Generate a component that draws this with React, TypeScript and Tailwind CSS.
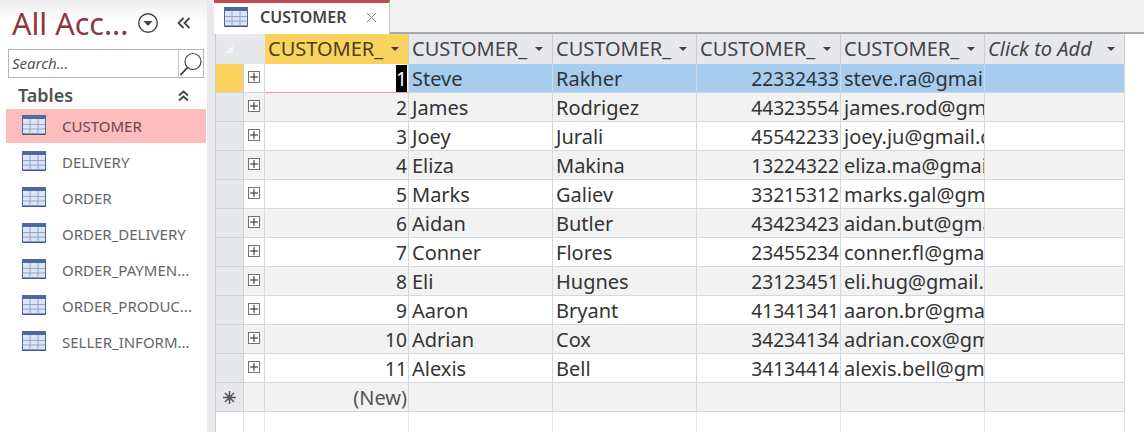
const font = { fontFamily: '"Noto Sans", "Open Sans", sans-serif' };

function TableIcon({ className = "" }: { className?: string }) {
  return (
    <svg width="24" height="20" viewBox="0 0 24 20" className={className}>
      <rect x="0" y="0" width="24" height="20" fill="#dbe5f3" />
      <rect x="0" y="0" width="24" height="4" fill="#4f6a9c" />
      <rect x="0" y="18.5" width="24" height="1.5" fill="#3d5480" />
      <rect x="0" y="0" width="1" height="20" fill="#4f6a9c" />
      <rect x="23" y="0" width="1" height="20" fill="#4f6a9c" />
      <path d="M1 9.5H23M1 14H23M8 4V19M16 4V19" stroke="#8ea6cc" strokeWidth="1" fill="none" />
    </svg>
  );
}

function Arrow() {
  return (
    <svg width="10" height="6" viewBox="0 0 10 6" className="shrink-0">
      <path d="M1 1H9L5 5Z" fill="#404040" />
    </svg>
  );
}

function Expander() {
  return (
    <div className="w-[12px] h-[12px] mb-[4px] border border-[#707070] bg-white flex items-center justify-center">
      <svg width="8" height="8" viewBox="0 0 8 8">
        <path d="M4 0V8M0 4H8" stroke="#222" strokeWidth="1" />
      </svg>
    </div>
  );
}

const nav = ["CUSTOMER", "DELIVERY", "ORDER", "ORDER_DELIVERY", "ORDER_PAYMEN...", "ORDER_PRODUC...", "SELLER_INFORM..."];

const rows = [
  [1, "Steve", "Rakher", 22332433, "steve.ra@gmail.com"],
  [2, "James", "Rodrigez", 44323554, "james.rod@gmail.com"],
  [3, "Joey", "Jurali", 45542233, "joey.ju@gmail.com"],
  [4, "Eliza", "Makina", 13224322, "eliza.ma@gmail.com"],
  [5, "Marks", "Galiev", 33215312, "marks.gal@gmail.com"],
  [6, "Aidan", "Butler", 43423423, "aidan.but@gmail.com"],
  [7, "Conner", "Flores", 23455234, "conner.fl@gmail.com"],
  [8, "Eli", "Hugnes", 23123451, "eli.hug@gmail.com"],
  [9, "Aaron", "Bryant", 41341341, "aaron.br@gmail.com"],
  [10, "Adrian", "Cox", 34234134, "adrian.cox@gmail.com"],
  [11, "Alexis", "Bell", 34134414, "alexis.bell@gmail.com"],
] as const;

const grid = "grid grid-cols-[28px_21px_144px_144px_144px_144px_144px_140px] w-[909px]";
const cell = "h-[29px] border-r border-b border-[#d4d9df] flex items-center overflow-hidden whitespace-nowrap text-[#333] pt-[2px] pl-[3px]";
const txt = "text-[20px] pr-[3px]";
const num = "justify-end pr-[1px] text-[19.2px]";

function Header({ label, active, italic }: { label: string; active?: boolean; italic?: boolean }) {
  return (
    <div className={`h-[30px] border-r border-[#c8ced6] flex items-center justify-between pl-[3px] pr-[8px] text-[20px] overflow-hidden whitespace-nowrap ${active ? "bg-[#fad35f] text-[#4a3f1a]" : "bg-[#e6e8ec] text-[#444]"} ${italic ? "italic" : ""}`}>
      <span>{label}</span>
      <Arrow />
    </div>
  );
}

export default function App() {
  return (
    <div className="w-[1144px] h-[432px] overflow-hidden flex bg-white" style={font}>
      <aside className="w-[207px] shrink-0 bg-white flex flex-col">
        <div className="h-[46px] pl-[12px] flex items-center gap-[9px] bg-gradient-to-b from-[#eeeeee] via-white to-white">
          <span className="text-[30.5px] leading-none text-[#8a3a3e]">All Acc...</span>
          <svg width="22" height="22" viewBox="0 0 22 22" className="shrink-0">
            <circle cx="11" cy="11" r="9.3" fill="none" stroke="#444" strokeWidth="1.4" />
            <path d="M6.5 9H15.5L11 14Z" fill="#444" />
          </svg>
          <svg width="16" height="14" viewBox="0 0 16 14" className="ml-[8px] shrink-0">
            <path d="M7.5 2L2.5 7L7.5 12M13.5 2L8.5 7L13.5 12" fill="none" stroke="#444" strokeWidth="1.8" />
          </svg>
        </div>
        <div className="ml-[8px] mr-[3px] mt-[3px] h-[29px] border border-[#b5b5b5] flex">
          <span className="flex-1 text-[15px] italic text-[#555] pl-[3px] leading-[26px]">Search...</span>
          <div className="w-[25px] border-l border-[#c5c5c5] flex items-center justify-center">
            <svg width="24" height="24" viewBox="0 0 24 24">
              <circle cx="14" cy="9.5" r="8" fill="none" stroke="#444" strokeWidth="1.2" />
              <path d="M8.5 15.5L1.5 23" stroke="#333" strokeWidth="1.8" />
            </svg>
          </div>
        </div>
        <div className="h-[31px] pl-[18px] pr-[17px] pt-[4px] flex items-center justify-between">
          <span className="text-[18px] font-semibold text-[#505050]">Tables</span>
          <svg width="13" height="13" viewBox="0 0 13 13">
            <path d="M2 6.5L6.5 2.5L11 6.5M2 11.5L6.5 7.5L11 11.5" fill="none" stroke="#444" strokeWidth="1.8" />
          </svg>
        </div>
        <div className="flex flex-col ml-[6px] mr-px">
          {nav.map((n, i) => (
            <div key={n} className={`h-[36px] flex items-start pl-[16px] gap-[16px] text-[15px] ${i === 0 ? "bg-[linear-gradient(#fdbcbe_0,#fdbcbe_34px,white_34px)] text-[#6b4548]" : "text-[#666]"}`}>
              <TableIcon className="shrink-0 mt-[6px]" />
              <span className="whitespace-nowrap leading-[34px]">{n}</span>
            </div>
          ))}
        </div>
      </aside>

      <div className="w-[8px] shrink-0 bg-[#e9e9ea]" />

      <main className="flex-1 flex flex-col bg-white min-w-0">
        <div className="h-[34px] flex bg-[#f2f2f2] shrink-0 items-stretch">
          <div className="w-[176px] -ml-[1px] border-t-[3px] border-t-[#c24a50] border-r border-r-[#c8c8c8] bg-white flex items-center pl-[10px] pb-[3px]">
            <TableIcon />
            <span className="ml-[12px] text-[16px] font-semibold text-[#444]">CUSTOMER</span>
            <svg width="11" height="11" viewBox="0 0 11 11" className="ml-[20px]">
              <path d="M1 1L10 10M10 1L1 10" stroke="#888" strokeWidth="1" />
            </svg>
          </div>
          <div className="flex-1 border-b-2 border-[#a9a9a9]" />
        </div>

        <div className="flex-1 border-l border-[#c8ced6] overflow-hidden">
          <div className={grid}>
            <div className="col-span-2 h-[30px] bg-[#e6e8ec] flex items-center justify-center pr-[24px]">
              <svg width="10" height="10" viewBox="0 0 10 10"><path d="M1 9L9 1V9Z" fill="#f3f4f6" /></svg>
            </div>
            <Header label="CUSTOMER_" active />
            <Header label="CUSTOMER_" />
            <Header label="CUSTOMER_" />
            <Header label="CUSTOMER_" />
            <Header label="CUSTOMER_" />
            <Header label="Click to Add" italic />

            {rows.map((r, i) => {
              const sel = i === 0;
              const bg = sel ? "bg-[#a6cdef]" : i % 2 === 1 ? "bg-[#f2f2f2]" : "bg-white";
              return (
                <div key={r[0]} className="contents">
                  <div className={`h-[29px] border-b border-r border-[#cdd2d8] ${sel ? "bg-[#fad35f]" : "bg-[#e6e8ec]"}`} />
                  <div className={`${cell} pr-[3px] justify-center ${i % 2 === 1 ? "bg-[#f2f2f2]" : "bg-white"}`}><Expander /></div>
                  <div className={`${cell} ${num} ${sel ? "bg-white border-b-[#e89a9e]" : bg}`}>
                    {sel ? <span className="bg-black text-white leading-[27px] -mt-[2px]">{r[0]}</span> : r[0]}
                  </div>
                  <div className={`${cell} ${txt} ${bg}`}>{r[1]}</div>
                  <div className={`${cell} ${txt} ${bg}`}>{r[2]}</div>
                  <div className={`${cell} ${num} ${bg}`}>{r[3]}</div>
                  <div className={`${cell} ${txt} ${bg}`}>{r[4]}</div>
                  <div className={`${cell} ${txt} ${bg}`} />
                </div>
              );
            })}

            <div className="h-[29px] border-b border-r border-[#cdd2d8] bg-[#e6e8ec] flex items-center justify-center">
              <svg width="15" height="15" viewBox="0 0 15 15">
                <path d="M7.5 1V14M1 7.5H14M3 3L12 12M12 3L3 12" stroke="#555" strokeWidth="1.5" />
              </svg>
            </div>
            <div className={`${cell} bg-[#f2f2f2]`} />
            <div className={`${cell} justify-end pr-[1px] text-[20px] bg-[#f2f2f2] text-[#555]`}>(New)</div>
            <div className={`${cell} bg-[#f2f2f2]`} />
            <div className={`${cell} bg-[#f2f2f2]`} />
            <div className={`${cell} bg-[#f2f2f2]`} />
            <div className={`${cell} bg-[#f2f2f2]`} />
            <div className={`${cell} bg-[#f2f2f2]`} />

            <div className="h-[21px] border-r border-[#e4e7ea]" />
            <div className="h-[21px] border-r border-[#e4e7ea]" />
            <div className="h-[21px] border-r border-[#e4e7ea]" />
            <div className="h-[21px] border-r border-[#e4e7ea]" />
            <div className="h-[21px] border-r border-[#e4e7ea]" />
            <div className="h-[21px] border-r border-[#e4e7ea]" />
            <div className="h-[21px] border-r border-[#e4e7ea]" />
            <div className="h-[21px] border-r border-[#e4e7ea]" />
          </div>
        </div>
      </main>
    </div>
  );
}
